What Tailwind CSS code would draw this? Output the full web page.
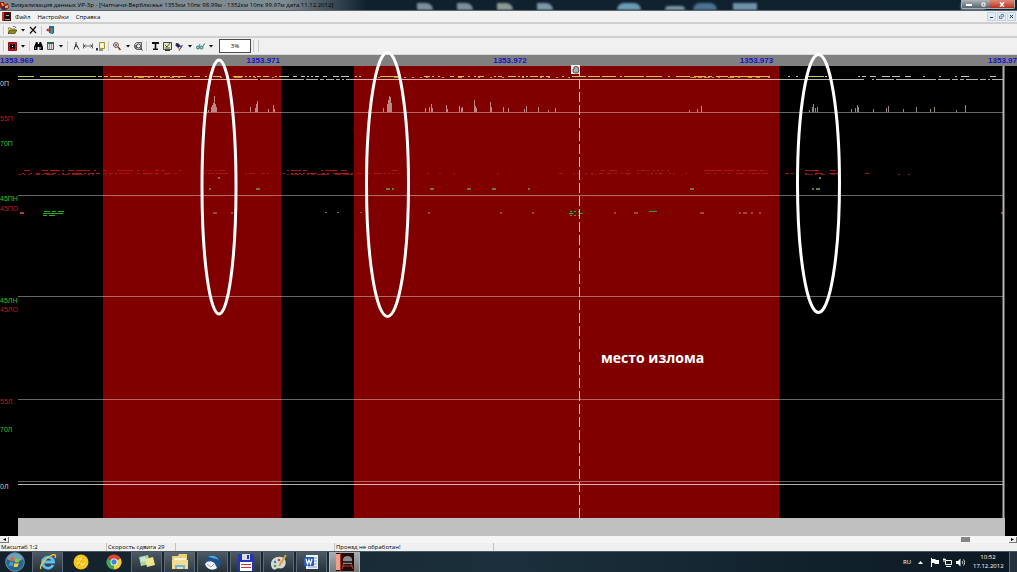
<!DOCTYPE html>
<html lang="ru">
<head>
  <meta charset="UTF-8" />
  <meta name="viewport" content="width=device-width, initial-scale=1" />
  <title>Визуализация данных УР-3р</title>
  <script src="https://cdn.jsdelivr.net/npm/@tailwindcss/browser@4"></script>
</head>
<body class="h-screen flex flex-col overflow-hidden bg-black font-['Open_Sans','Noto_Sans',sans-serif] text-[6px] leading-[8px] text-black">

  <!-- Title bar -->
  <header class="relative h-[11px] shrink-0 flex items-center justify-between overflow-hidden bg-linear-to-r from-[#7f8b92] from-28% via-[#10212e] via-36% to-[#0f2230] border-b border-[#5b656b]">
    <div class="absolute inset-0 flex items-end" aria-hidden="true">
      <div class="w-[41%]"></div>
      <div class="flex-1 flex items-end gap-6 blur-[1px]">
        <i class="w-4 h-[7px] bg-[#7d919b] rounded-tr-lg"></i>
        <i class="w-4 h-[7px] bg-[#7d919b] rounded-tr-lg"></i>
        <i class="w-4 h-[7px] bg-[#8d9992] rounded-tr-lg"></i>
        <i class="w-4 h-[7px] bg-[#7d98a8] rounded-tr-lg"></i>
        <i class="ml-10 w-6 h-[7px] bg-[#6d9ab4] rounded-t-lg"></i>
        <i class="w-5 h-[4px] bg-[#7d9aaa] rounded-t-lg"></i>
        <i class="w-6 h-[7px] -ml-4 bg-[#4b7490] rounded-t-lg"></i>
        <i class="w-6 h-[7px] -ml-2 bg-[#6f93aa]"></i>
        <i class="w-6 h-[7px] ml-auto mr-8 bg-[#6f93aa]"></i>
      </div>
    </div>
    <div class="relative flex items-center gap-[2px]">
      <svg class="w-[9px] h-[9px]" viewBox="0 0 9 9"><path d="M0 1h4l1 3 3-2 1 5-3 2H2L0 6z" fill="#8f1c18"/><path d="M1 2h2l1 3H2zM5 5l3-1v3H5z" fill="#e8a13c"/><path d="M2 6h3v2H2z" fill="#252a6b"/></svg>
      <h1 class="whitespace-nowrap">Визуализация данных УР-3р - [Чапчачи-Верблюжье 1353км 10пк 98.99м - 1352км 10пк 99.97м дата 11.12.2012]</h1>
    </div>
    <div class="relative self-start flex mr-[2px] h-[9px] rounded-b-xs overflow-hidden border border-t-0 border-[#a5aeb4]">
      <button aria-label="Свернуть" class="w-[14px] bg-linear-to-b from-[#aeb5ba] to-[#59646d] grid place-items-center"><svg class="w-[6px] h-[5px]" viewBox="0 0 6 5"><path d="M0 2h6v2H0z" fill="#fff"/></svg></button>
      <button aria-label="Развернуть" class="w-[14px] bg-linear-to-b from-[#aeb5ba] to-[#59646d] grid place-items-center"><svg class="w-[5px] h-[5px]" viewBox="0 0 5 5"><path d="M1 1h3v3H1z" fill="none" stroke="#fff"/></svg></button>
      <button aria-label="Закрыть" class="w-[24px] bg-linear-to-b from-[#dd8a7c] to-[#b92a16] grid place-items-center"><svg class="w-[6px] h-[5px]" viewBox="0 0 6 5"><path d="M1 0l4 5M5 0L1 5" stroke="#fff" stroke-width="1.4"/></svg></button>
    </div>
  </header>

  <!-- Menu -->
  <nav class="h-[13px] shrink-0 flex items-center justify-between bg-[#f1f1f1] border-b-2 border-[#cfcfcf]">
    <div class="flex items-center">
      <svg class="w-[9px] h-[9px] ml-[2px] mr-1" viewBox="0 0 9 9"><path d="M0 0h9v9H0z" fill="#4a0e10"/><path d="M0 0h2v9H0z" fill="#c03a2c"/><path d="M4 2h3l1 2v3H3V4z" fill="#111"/><path d="M4 3h3v1H4zM3 7h5v1H3z" fill="#a8a29a"/></svg>
      <button class="mr-[7px]">Файл</button>
      <button class="mr-[7px]">Настройки</button>
      <button>Справка</button>
    </div>
    <div class="flex gap-px mr-px">
      <button aria-label="Свернуть окно" class="w-[9px] h-[9px] bg-[#dfebf7] border border-[#c3d4e6] grid place-items-center"><svg class="w-[5px] h-[5px]" viewBox="0 0 5 5"><path d="M1 3h3v1H1z" fill="#27405e"/></svg></button>
      <button aria-label="Восстановить окно" class="w-[9px] h-[9px] bg-[#dfebf7] border border-[#c3d4e6] grid place-items-center"><svg class="w-[5px] h-[5px]" viewBox="0 0 5 5"><path d="M2 .5h2.500v2.500M.5 2h2.500v2.500H.5z" fill="none" stroke="#4b6583" stroke-width=".8"/></svg></button>
      <button aria-label="Закрыть окно" class="w-[9px] h-[9px] bg-[#dfebf7] border border-[#c3d4e6] grid place-items-center"><svg class="w-[5px] h-[5px]" viewBox="0 0 5 5"><path d="M1 1l3 3M4 1L1 4" stroke="#27405e"/></svg></button>
    </div>
  </nav>

  <!-- File toolbar -->
  <div class="h-[14px] shrink-0 flex items-center bg-[#f0f0f0] border-b-2 border-[#cfcfcf]">
    <span class="w-[2px] h-[10px] ml-[3px] mr-px border-x border-l-[#c8c8c8] border-r-white"></span>
    <button aria-label="Открыть" class="w-3 grid place-items-center"><svg class="w-[9px] h-[8px]" viewBox="0 0 9 8"><path d="M0 2h3l1 1h3v2H2L0 8z" fill="#e9dc6a" stroke="#55531c" stroke-width=".6"/><path d="M0 7.500L2 4h7L7 7.500z" fill="#8c8a22" stroke="#33310f" stroke-width=".6"/><path d="M5 1c1-1 2-1 3 1" fill="none" stroke="#222" stroke-width=".7"/></svg></button>
    <button aria-label="Недавние" class="w-[9px] grid place-items-center"><svg class="w-[4px] h-[3px]" viewBox="0 0 4 3"><path d="M0 0h4L2 2.500z"/></svg></button>
    <button aria-label="Удалить" class="w-3 grid place-items-center"><svg class="w-[8px] h-[8px]" viewBox="0 0 8 8"><path d="M1 1l6 6M7 .5L1 7.500" stroke="#111" stroke-width="1.200"/></svg></button>
    <span class="w-px h-[9px] mx-[2px] bg-[#c8c8c8]"></span>
    <button aria-label="Выход" class="w-3 grid place-items-center"><svg class="w-[9px] h-[8px]" viewBox="0 0 9 8"><path d="M3 0h5v7H3z" fill="#1d7d83"/><path d="M4 1l3 1v6L4 7z" fill="#35a3a8" stroke="#124" stroke-width=".4"/><path d="M0 4l2.500-2v1.300H5v1.500H2.500V6z" fill="#c42a22"/></svg></button>
  </div>

  <!-- View toolbar -->
  <div class="h-[17px] shrink-0 flex items-center bg-[#f0f0f0] border-b border-[#d8d8d8]">
    <span class="w-[2px] h-[12px] ml-[3px] mr-px border-x border-l-[#c8c8c8] border-r-white"></span>
    <button aria-label="Каналы" class="w-3 grid place-items-center"><svg class="w-[9px] h-[9px]" viewBox="0 0 9 9"><path d="M.5.5h8v8h-8z" fill="#c41a1c" stroke="#8c1012"/><path d="M2 2h2v1h1V2h2v5H5V6H4v1H2z" fill="#170506"/><path d="M4 4h1v1H4z" fill="#fff"/></svg></button>
    <button aria-label="Список каналов" class="w-[9px] grid place-items-center"><svg class="w-[4px] h-[3px]" viewBox="0 0 4 3"><path d="M0 0h4L2 2.500z"/></svg></button>
    <span class="w-px h-[10px] mx-[2px] bg-[#d0d0d0]"></span>
    <button aria-label="Найти" class="w-3 grid place-items-center"><svg class="w-[9px] h-[8px]" viewBox="0 0 9 8"><path d="M2 0h1.500l.5 2h1l.5-2H7l2 5v3H5.500V5h-2v3H0V5z"/><path d="M1.500 5v2M6.500 5v2" stroke="#ccc" stroke-width=".6"/></svg></button>
    <button aria-label="Таблица" class="w-3 grid place-items-center"><svg class="w-[7px] h-[8px]" viewBox="0 0 7 8"><path d="M.5.5h6v7h-6z" fill="#d7dcd8" stroke="#555"/><path d="M0 0h7v2H0z" fill="#2f5f5c"/><path d="M2.500 2v6M4.500 2v6" stroke="#777" stroke-width=".7"/></svg></button>
    <button aria-label="Виды таблицы" class="w-[9px] grid place-items-center"><svg class="w-[4px] h-[3px]" viewBox="0 0 4 3"><path d="M0 0h4L2 2.500z"/></svg></button>
    <span class="w-px h-[10px] mx-[2px] bg-[#c8c8c8]"></span>
    <button aria-label="Циркуль" class="w-3 grid place-items-center"><svg class="w-[7px] h-[8px]" viewBox="0 0 7 8"><path d="M3 0v2L1 7.500M3 2l3 5.500M2 5c1-1 2-1 3 0" fill="none" stroke="#222" stroke-width=".9"/></svg></button>
    <button aria-label="Расстояние" class="w-3 grid place-items-center"><svg class="w-[10px] h-[6px]" viewBox="0 0 10 6"><path d="M.5.5v5M9.500.5v5M1 3h8M2.500 1.500L1 3l1.500 1.500M7.500 1.500L9 3 7.500 4.500" fill="none" stroke="#333" stroke-width=".7"/></svg></button>
    <button aria-label="Область" class="w-3 grid place-items-center"><svg class="w-[9px] h-[9px]" viewBox="0 0 9 9"><path d="M3.500.5h5v6h-5z" fill="#f3efb4" stroke="#a4962a"/><path d="M5 2h2v3H5z" fill="#fff"/><path d="M0 6h2v2.500H0z" fill="#23345f"/><path d="M3 8h4" stroke="#333"/></svg></button>
    <span class="w-px h-[10px] mx-[2px] bg-[#c8c8c8]"></span>
    <button aria-label="Масштаб" class="w-3 grid place-items-center"><svg class="w-[8px] h-[9px]" viewBox="0 0 8 9"><circle cx="3" cy="3" r="2.400" fill="#f2e4e4" stroke="#444" stroke-width=".9"/><path d="M2 3h2M3 2v2" stroke="#b3191b" stroke-width=".8"/><path d="M5 5l2.500 3" stroke="#6b3b12" stroke-width="1.500"/></svg></button>
    <button aria-label="Варианты масштаба" class="w-[9px] grid place-items-center"><svg class="w-[4px] h-[3px]" viewBox="0 0 4 3"><path d="M0 0h4L2 2.500z"/></svg></button>
    <button aria-label="Обзор" class="w-3 grid place-items-center"><svg class="w-[9px] h-[9px]" viewBox="0 0 9 9"><path d="M.5 2.500l2-2h5v7h-5l-2-2z" fill="#d5d5d5" stroke="#444" stroke-width=".8"/><circle cx="4.500" cy="4" r="2" fill="#fff" stroke="#222" stroke-width=".8"/><path d="M6 5.500L8.500 8.500M2 3v4" stroke="#222"/></svg></button>
    <span class="w-px h-[10px] mx-[2px] bg-[#c8c8c8]"></span>
    <button aria-label="Текст" class="w-3 grid place-items-center"><svg class="w-[7px] h-[8px]" viewBox="0 0 7 8"><path d="M0 0h7v2H4.300v4.500H6V8H1V6.500h1.700V2H0z" fill="#111"/></svg></button>
    <button aria-label="График" class="w-3 grid place-items-center"><svg class="w-[9px] h-[9px]" viewBox="0 0 9 9"><path d="M.5.5h8v7h-8z" fill="#e8e6c4" stroke="#333" stroke-width=".9"/><path d="M2 3l2 2 3-4M2 6h5" fill="none" stroke="#35551f" stroke-width=".9"/><path d="M2 8.500h5" stroke="#333"/></svg></button>
    <button aria-label="Заливка" class="w-3 grid place-items-center"><svg class="w-[8px] h-[9px]" viewBox="0 0 8 9"><path d="M0 3l3-2 3 3-3 2z" fill="#34346f"/><path d="M1 1l3 4" stroke="#111"/><path d="M7.500 3L4 8.500M5 4l1.500 2" stroke="#55468d" stroke-width="1.100"/><path d="M3 6l1 1" stroke="#d1a62a"/></svg></button>
    <button aria-label="Цвета заливки" class="w-[9px] grid place-items-center"><svg class="w-[4px] h-[3px]" viewBox="0 0 4 3"><path d="M0 0h4L2 2.500z"/></svg></button>
    <button aria-label="Просмотр" class="w-3 grid place-items-center"><svg class="w-[9px] h-[7px]" viewBox="0 0 9 7"><circle cx="2" cy="4.500" r="1.500" fill="#9fd0cc" stroke="#226e69" stroke-width=".9"/><circle cx="5.500" cy="4.500" r="1.500" fill="#9fd0cc" stroke="#226e69" stroke-width=".9"/><path d="M3 3.500L4 1M7 3.500L8 1h1" fill="none" stroke="#226e69" stroke-width=".8"/></svg></button>
    <button aria-label="Режимы просмотра" class="w-[9px] grid place-items-center"><svg class="w-[4px] h-[3px]" viewBox="0 0 4 3"><path d="M0 0h4L2 2.500z"/></svg></button>
    <input type="text" value="3%" aria-label="Порог" class="w-8 h-[14px] ml-1 text-center bg-white border border-[#4a4a4a]" />
    <span class="w-px h-[12px] ml-[2px] bg-[#c8c8c8]"></span>
    <span class="w-px h-[12px] ml-1 bg-[#c8c8c8]"></span>
  </div>

  <!-- Defectogram -->
  <main class="relative flex-1 min-h-0 flex flex-col">
    <div class="h-[11px] shrink-0 flex bg-[#808080] font-['Liberation_Sans',sans-serif] font-bold text-[8px] leading-[11px] text-[#1414c8]">
      <span class="w-[24.25%]">1353.969</span>
      <span class="w-[24.25%]">1353.971</span>
      <span class="w-[24.25%]">1353.972</span>
      <span class="flex-1">1353.973</span>
      <span>1353.97</span>
    </div>
    <div class="flex-1"></div>

    <svg class="absolute inset-0 w-full h-full overflow-visible" viewBox="0 55 1017 463" preserveAspectRatio="none">
      <g fill="#800000">
        <rect x="103" y="66" width="178" height="452"/>
        <rect x="354" y="66" width="425" height="452"/>
      </g>
      <g stroke="#fff" stroke-opacity=".4" shape-rendering="crispEdges">
        <path d="M18 112.500H1003M18 195.500H1003M18 296.500H1003M18 399.500H1003M18 481.500H1003"/>
        <path d="M18 79.500H1003M18 484.500H1003" stroke-opacity=".7"/>
      </g>
      <g id="echoes" shape-rendering="crispEdges"></g>
      <path d="M579.500 66V518" stroke="#ffe020" stroke-dasharray="10 3" shape-rendering="crispEdges"/>
      <path d="M1003.500 66V518" stroke="#b4b4b4" stroke-width="2"/>
      <g fill="none" stroke="#fff" stroke-width="3">
        <ellipse cx="219" cy="187" rx="17" ry="127"/>
        <ellipse cx="387.500" cy="184.500" rx="21" ry="132"/>
        <ellipse cx="818.500" cy="183.500" rx="21" ry="129"/>
      </g>
      <g>
        <path d="M571 65h9v9h-9z" fill="#fff"/>
        <path d="M573 69v3l2 1h3l1-3-1-3h-1l-1-1-1 1h-1v2z" fill="#aaa" stroke="#333" stroke-width=".8"/>
      </g>
    </svg>

    <!-- Channel labels -->
    <div class="absolute top-[2px] bottom-0 left-0 w-5 font-['Liberation_Sans',sans-serif] text-[7px] leading-[8px]">
      <span class="absolute top-[5%] text-[#c8c8c8]">0П</span>
      <span class="absolute top-[12.5%] text-[#c01c1c]">55П</span>
      <span class="absolute top-[18%] text-[#2cc62c]">70П</span>
      <span class="absolute top-[30%] text-[#2cc62c]">45ПН</span>
      <span class="absolute top-[32%] text-[#c01c1c]">45ПО</span>
      <span class="absolute top-[52%] text-[#2cc62c]">45ЛН</span>
      <span class="absolute top-[54%] text-[#c01c1c]">45ЛО</span>
      <span class="absolute top-[74%] text-[#c01c1c]">55Л</span>
      <span class="absolute top-[80%] text-[#2cc62c]">70Л</span>
      <span class="absolute top-[92.5%] text-[#c8c8c8]">0Л</span>
    </div>
    <p class="absolute left-[59%] top-[63%] pl-px pt-px font-bold text-[14px] leading-[20px] text-white whitespace-nowrap">место излома</p>
  </main>
  <div class="h-[18px] shrink-0 ml-[18px] mr-[12px] bg-[#c0c0c0]"></div>

  <!-- Scroll bar -->
  <div class="h-[7px] shrink-0 flex items-center justify-between bg-[#f5f5f5]">
    <button aria-label="Влево" class="w-[9px] h-[6px] bg-[#f0f0f0] border-r border-b border-[#777] grid place-items-center"><svg class="w-[3px] h-[3px]" viewBox="0 0 3 3"><path d="M3 0v3L0 1.500z"/></svg></button>
    <div class="flex-1 flex justify-end pr-[39px]"><span class="w-[9px] h-[5px] bg-[#858585]"></span></div>
    <button aria-label="Вправо" class="w-[8px] h-[6px] bg-[#f0f0f0] border-r border-b border-[#777] grid place-items-center"><svg class="w-[3px] h-[3px]" viewBox="0 0 3 3"><path d="M0 0v3l3-1.500z"/></svg></button>
  </div>

  <!-- Status bar -->
  <footer class="h-[8px] shrink-0 flex bg-[#f0f0f0] whitespace-nowrap">
    <span class="w-[107px] pl-px border-r border-[#c4c4c4]">Масштаб 1:2</span>
    <span class="w-[69px] pl-px border-r border-[#c4c4c4]">Скорость сдвига 29</span>
    <span class="w-[159px] border-r border-[#c4c4c4]"></span>
    <span class="w-[159px] pl-px border-r border-[#c4c4c4]">Проезд не обработан!</span>
  </footer>

  <!-- Taskbar -->
  <div class="h-[21px] shrink-0 flex items-center justify-between bg-linear-to-r from-[#14202a] via-[#1b303c] via-50% to-[#0b1822] border-t border-[#4b5962] text-white">
    <div class="h-full flex items-center gap-[2px]">
      <button aria-label="Пуск" class="w-[30px] h-full grid place-items-center"><svg class="w-[20px] h-[20px]" viewBox="0 0 20 20"><circle cx="10" cy="10" r="9.300" fill="#27658f" stroke="#7fa9c2" stroke-width=".8"/><path d="M2 7a8.500 8.500 0 0 1 16 0c-5 3-11 3-16 0z" fill="#8db9d0" opacity=".7"/><path d="M5.500 6c1.500-1 3-1 4 0l-.8 3.500c-1.500-1-2.700-.8-4 0z" fill="#e8642a"/><path d="M10.500 6.300c1.500 1 3 .8 4.500 0l-1 3.700c-1.500.8-3 .8-4.300 0z" fill="#8cc63f"/><path d="M4.500 10.500c1.500-1 2.700-.8 4 0l-1 3.500c-1-.8-2.500-.8-4 0z" fill="#3fa0e0"/><path d="M9.500 11c1.500.8 3 .8 4.300 0l-1 3.500c-1.500.8-3 .8-4.300 0z" fill="#f8cf3a"/></svg></button>
      <button aria-label="Internet Explorer" class="w-[31px] h-full border-x border-[#5d6a73] bg-linear-to-b from-[#4d5a63] to-[#26323b] grid place-items-center"><svg class="w-[18px] h-[18px]" viewBox="0 0 18 18"><path d="M14 12a5.500 5.500 0 1 1 .5-3H5" fill="none" stroke="#5cc0f4" stroke-width="2.800"/><path d="M2 16C0 13 6 5 13 2c4-1 4 1 3 3" fill="none" stroke="#f2c83a" stroke-width="1.300"/></svg></button>
      <button aria-label="Агент" class="w-[31px] h-full grid place-items-center"><svg class="w-[16px] h-[16px]" viewBox="0 0 16 16"><circle cx="8" cy="8" r="7.500" fill="#f6c51c"/><path d="M4 6l3-2 2 2 3-1M4 10l3-2 2 3 3-2" fill="none" stroke="#fbe67c" stroke-width="1.300"/><path d="M5 12l6-8" stroke="#d18f0c" stroke-width=".8"/></svg></button>
      <button aria-label="Chrome" class="w-[31px] h-full grid place-items-center"><svg class="w-[16px] h-[16px]" viewBox="0 0 16 16"><path d="M8 8L1.500 4.200A7.500 7.500 0 0 1 14.500 4.200z" fill="#dc4433"/><path d="M8 8L14.500 4.200A7.500 7.500 0 0 1 8 15.500z" fill="#f7cb35"/><path d="M8 8v7.500A7.500 7.500 0 0 1 1.500 4.200z" fill="#3ea854"/><circle cx="8" cy="8" r="3.500" fill="#fff"/><circle cx="8" cy="8" r="2.700" fill="#3f87d8"/></svg></button>
      <button aria-label="Заметки" class="w-[31px] h-full border-x border-[#5d6a73] bg-linear-to-b from-[#4d5a63] to-[#26323b] grid place-items-center"><svg class="w-[18px] h-[16px]" viewBox="0 0 18 16"><path d="M1 3l9-2 2 9-9 2z" fill="#a9d8a0"/><path d="M7 5l8-2 2 8-8 2z" fill="#f1e48c"/><path d="M2 4l5-1 1 4-5 1z" fill="#c8e6e8"/></svg></button>
      <button aria-label="Проводник" class="w-[31px] h-full border-x border-[#5d6a73] bg-linear-to-b from-[#5a666e] to-[#303c45] grid place-items-center"><svg class="w-[18px] h-[18px]" viewBox="0 0 18 18"><path d="M1 3h6l1-2h8v15H1z" fill="#e8cf79"/><path d="M3 5h12v7H3z" fill="#faf3cd"/><path d="M1 7h16v9H1z" fill="#f2dd92"/><path d="M4 16v-4h10v4h-2v-2H6v2z" fill="#70b4d8"/></svg></button>
      <button aria-label="Thunderbird" class="w-[31px] h-full border-x border-[#5d6a73] bg-linear-to-b from-[#4d5a63] to-[#26323b] grid place-items-center"><svg class="w-[18px] h-[17px]" viewBox="0 0 18 17"><path d="M2 8C1 3 7 0 12 2c5 1 6 8 3 11-4 4-11 2-13-5z" fill="#1c4f8c"/><path d="M4 3c3-2 8-2 11 3-4-2-7-2-11-3z" fill="#5aa5dc"/><path d="M1 10c3-4 8-3 10 0l2 4c-4 3-10 2-12-4z" fill="#f3f5f7"/><path d="M3 10l4 3 3-3" fill="none" stroke="#8ba2b5"/></svg></button>
      <button aria-label="Total Commander" class="w-[31px] h-full border-x border-[#5d6a73] bg-linear-to-b from-[#4d5a63] to-[#26323b] grid place-items-center"><svg class="w-[16px] h-[17px]" viewBox="0 0 16 17"><path d="M0 0h15l1 1v16H0z" fill="#2336b4"/><path d="M4 0h8v6H4z" fill="#d8dce8"/><path d="M9 1h2v4H9z" fill="#2336b4"/><path d="M2 8h12v9H2z" fill="#fff"/><path d="M3 10.500h10M3 13.500h10" stroke="#c23648"/></svg></button>
      <button aria-label="Paint" class="w-[31px] h-full border-x border-[#5d6a73] bg-linear-to-b from-[#4d5a63] to-[#26323b] grid place-items-center"><svg class="w-[18px] h-[17px]" viewBox="0 0 18 17"><path d="M1 10C1 5 6 2 11 3s6 7 3 10-6 0-8 2-5-1-5-5z" fill="#d6dbd3"/><circle cx="5" cy="8" r="1.300" fill="#3b7fc4"/><circle cx="9" cy="6" r="1.300" fill="#c84b32"/><circle cx="5" cy="12" r="1.300" fill="#4ea04b"/><path d="M16 1L9 12" stroke="#d8a040" stroke-width="2"/></svg></button>
      <button aria-label="Word" class="w-[31px] h-full border-x border-[#5d6a73] bg-linear-to-b from-[#4d5a63] to-[#26323b] grid place-items-center"><svg class="w-[15px] h-[16px]" viewBox="0 0 15 16"><path d="M2 1h12v14H2z" fill="#eef3fa"/><path d="M10 4h3M10 7h3M10 10h3M4 13h9" stroke="#7f9ccc"/><path d="M0 3h10v9H0z" fill="#2f5fb0"/><path d="M2 5l1.500 5L5 6l1.500 4L8 5" fill="none" stroke="#fff" stroke-width="1.200"/></svg></button>
      <button aria-label="УР-3р" class="w-[31px] h-full border-x border-[#aab1b5] bg-linear-to-b from-[#a9afb2] to-[#74797c] grid place-items-center"><svg class="w-[18px] h-[18px]" viewBox="0 0 18 18"><path d="M0 0h18v18H0z" fill="#220a0b"/><path d="M0 1h4v16H0z" fill="#eaa18a"/><path d="M4 0h1v18H4z" fill="#a82b20"/><path d="M7 6c1-4 8-4 9 0v5H7z" fill="#8a8a88"/><path d="M7 8h9v2H7z" fill="#2b2b2b"/><path d="M6 13h11M8 11l-2 5M15 11l2 5" stroke="#b13a2a"/></svg></button>
    </div>
    <div class="h-full flex items-center">
      <span class="mr-[7px]">RU</span>
      <button aria-label="Скрытые значки" class="mr-[7px]"><svg class="w-[5px] h-[3px]" viewBox="0 0 5 3"><path d="M0 3h5L2.500 0z" fill="#fff"/></svg></button>
      <svg class="w-[9px] h-[9px] mr-1" viewBox="0 0 9 9"><path d="M1.500 0v9" stroke="#fff"/><path d="M2 1h3l1 1h3v4H5L4 5H2z" fill="#fff"/></svg>
      <svg class="w-[9px] h-[9px] mr-1" viewBox="0 0 9 9"><path d="M2.500 2.500h6v4h-6zM3 8.500h5M1 0v4M0 1.500h3" fill="none" stroke="#fff"/></svg>
      <svg class="w-[9px] h-[9px] mr-[8px]" viewBox="0 0 9 9"><path d="M0 3h2l2.500-2.500v8L2 6H0z" fill="#fff"/><path d="M6 3c1 1 1 2 0 3M7.500 1.500c1.500 2 1.500 4 0 6" fill="none" stroke="#fff" stroke-width=".8"/></svg>
      <time class="w-[30px] mr-[6px] text-center leading-[9px]">10:52<br />17.12.2012</time>
      <button aria-label="Свернуть все окна" class="w-[8px] h-full border-l border-[#5d6a73] bg-[#23323d]"></button>
    </div>
  </div>

  <script>
    // Echo rows: [x from, x to, share of filled cells]
    const rows = [
      { y: 76, h: 1, color: '#c9c94e', runs: [[18, 34, 1], [40, 95, .95], [98, 200, .75], [205, 281, .6], [380, 400, 1], [422, 480, .5], [480, 580, .55], [580, 640, .8], [640, 690, .7], [694, 770, .95], [808, 825, .9]] },
      { y: 76, h: 1, color: '#c4c4c4', runs: [[281, 360, .6], [786, 800, .5], [825, 830, .6], [848, 900, .5], [905, 940, .4], [955, 968, .6], [990, 996, .5]] },
      { y: 77, h: 1, color: '#d8891e', runs: [[130, 280, .25], [354, 600, .2], [690, 770, .4]] },
      { y: 79, h: 1, color: '#000000', runs: [[250, 262, .5], [286, 350, .15], [850, 1000, .2]] },
      { y: 170, h: 1, color: '#b01414', runs: [[24, 32, .6], [40, 98, .6], [103, 180, .4], [205, 225, .7], [285, 350, .5], [380, 398, .5], [585, 680, .3], [700, 768, .8], [805, 818, .8], [830, 838, .8], [864, 870, .6]] },
      { y: 173, h: 1, color: '#b01414', runs: [[18, 100, .6], [103, 180, .6], [184, 190, .6], [204, 228, .8], [243, 270, .3], [281, 355, .55], [358, 400, .5], [425, 500, .15], [555, 690, .45], [704, 768, .5], [785, 792, .7], [805, 840, .6], [863, 870, .5]] },
      { y: 174, h: 1, color: '#7c1616', runs: [[18, 98, .6], [103, 180, .4], [285, 352, .6], [585, 690, .2], [805, 838, .4], [880, 960, .04]] },
      { y: 188, h: 2, color: '#6a7a3a', runs: [[209, 218, .4], [256, 262, .3], [386, 394, .4], [428, 434, .3], [463, 475, .4], [488, 496, .4], [524, 542, .1], [690, 700, .3], [812, 820, .4], [855, 861, .3]] },
      { y: 177, h: 2, color: '#8a6a4a', runs: [[218, 222, .5], [819, 823, .6]] },
      { y: 211, h: 1, color: '#22b022', runs: [[42, 64, .8], [570, 580, .7], [649, 656, .7]] },
      { y: 213, h: 1, color: '#22b022', runs: [[43, 62, .9], [569, 582, .7], [651, 654, .8]] },
      { y: 215, h: 1, color: '#22b022', runs: [[43, 55, .8], [570, 579, .7]] },
      { y: 212, h: 2, color: '#a84434', runs: [[18, 24, .3], [144, 160, .2], [184, 192, .4], [213, 240, .2], [388, 396, .3], [428, 432, .4], [498, 502, .5], [528, 536, .4], [612, 616, .4], [634, 637, .5], [662, 666, .4], [700, 704, .4], [737, 760, .5], [816, 820, .5], [868, 872, .2], [923, 926, .5], [957, 960, .4], [1001, 1003, .6]] },
      { y: 212, h: 1, color: '#4f7a4f', runs: [[323, 327, .5], [335, 339, .4], [358, 362, .5], [800, 805, .3]] }
    ];
    // Spikes above the 55 degree line: [x, height]
    const spikes = [
      [208, 2], [211, 5], [212, 7], [213, 9], [214, 16], [215, 8], [216, 5], [250, 5], [255, 4], [256, 8], [257, 11], [268, 3], [273, 7], [274, 3],
      [383, 4], [387, 8], [388, 12], [389, 16], [390, 15], [391, 9], [425, 4], [429, 5], [431, 8], [432, 4], [446, 7], [447, 3],
      [459, 6], [461, 4], [462, 5], [474, 12], [475, 6], [476, 4], [490, 10], [491, 5], [503, 5], [508, 4], [524, 3], [526, 6], [538, 5], [548, 2], [555, 4],
      [689, 2], [697, 3], [701, 6], [809, 2], [812, 5], [813, 8], [815, 4], [817, 5], [851, 3], [855, 4], [857, 7], [858, 5], [873, 3], [886, 4], [888, 6], [903, 3], [916, 5], [930, 3], [934, 5], [956, 2], [965, 7]
    ];

    let seed = 7;
    function random() {
      seed = (seed * 16807) % 2147483647;
      return seed / 2147483647;
    }

    const echoes = document.getElementById('echoes');
    function addPath(d, color) {
      const path = document.createElementNS('http://www.w3.org/2000/svg', 'path');
      path.setAttribute('d', d);
      path.setAttribute('fill', color);
      echoes.appendChild(path);
    }

    rows.forEach(row => {
      let d = '';
      row.runs.forEach(([from, to, fill]) => {
        for (let x = from; x < to; x += 2) {
          if (random() < fill) d += `M${x} ${row.y}h2v${row.h}h-2z`;
        }
      });
      addPath(d, row.color);
    });
    addPath(spikes.map(([x, h]) => `M${x} ${112 - h}h1v${h}h-1z`).join(''), 'rgb(225 205 205 / .65)');
  </script>
</body>
</html>
